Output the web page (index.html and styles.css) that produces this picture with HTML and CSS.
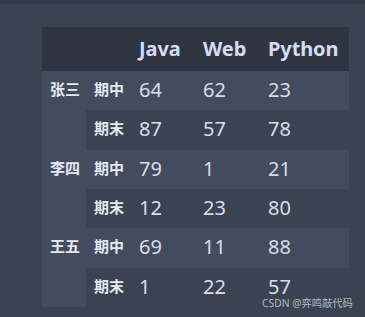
FILE: index.html
```html
<!DOCTYPE html>
<html lang="zh">
<head>
<meta charset="utf-8">
<link rel="stylesheet" href="styles.css">
</head>
<body>
<div class="topbar"></div>
<div class="page">
  <table class="scores">
    <colgroup>
      <col class="c-name"><col class="c-term"><col class="c-java"><col class="c-web"><col class="c-py">
    </colgroup>
    <thead>
      <tr><th></th><th></th><th>Java</th><th>Web</th><th>Python</th></tr>
    </thead>
    <tbody>
      <tr class="odd"><th class="name" rowspan="2">张三</th><th class="term">期中</th><td>64</td><td>62</td><td>23</td></tr>
      <tr class="even"><th class="term">期末</th><td>87</td><td>57</td><td>78</td></tr>
      <tr class="odd"><th class="name" rowspan="2">李四</th><th class="term">期中</th><td>79</td><td>1</td><td>21</td></tr>
      <tr class="even"><th class="term">期末</th><td>12</td><td>23</td><td>80</td></tr>
      <tr class="odd"><th class="name" rowspan="2">王五</th><th class="term">期中</th><td>69</td><td>11</td><td>88</td></tr>
      <tr class="even"><th class="term">期末</th><td>1</td><td>22</td><td>57</td></tr>
    </tbody>
  </table>
</div>
<div class="watermark">CSDN @弈鸣敲代码</div>
</body>
</html>
```
FILE: styles.css
```css
html, body {
  margin: 0;
  padding: 0;
}
body {
  background: #3b4252;
  width: 365px;
  height: 317px;
  overflow: hidden;
  position: relative;
  font-family: "Noto Sans", "Open Sans", "Noto Sans CJK SC", sans-serif;
}
.topbar {
  height: 4px;
  background: #323945;
}
.page {
  padding: 23px 0 0 42px;
}
.scores {
  border-collapse: collapse;
  border-spacing: 0;
  width: 307px;
  table-layout: fixed;
  color: #d8dee9;
}
.c-name { width: 44px; }
.c-term { width: 45px; }
.c-java { width: 64px; }
.c-web { width: 65px; }
.c-py { width: 89px; }
.scores th, .scores td {
  padding: 0 0 0 8px;
  text-align: left;
  white-space: nowrap;
  vertical-align: top;
  box-sizing: border-box;
}
.scores thead tr {
  background: #2e3440;
  height: 44px;
}
.scores thead th {
  font-size: 20px;
  font-weight: 700;
  color: #d3dcf5;
  padding-top: 8px;
  letter-spacing: -0.1px;
}
.scores tbody tr {
  height: 39.33px;
}
.scores tbody td {
  font-size: 20px;
  font-weight: 400;
  padding-top: 5px;
}
.scores .odd { background: #434c5e; }
.scores .even { background: #3b4252; }
.scores .name, .scores .term {
  font-family: "Noto Sans CJK SC", sans-serif;
  font-size: 15px;
  font-weight: 700;
  color: #e5e9f0;
  padding-top: 7px;
}
.watermark {
  position: absolute;
  left: 262px;
  top: 295px;
  font-family: "Noto Sans", "Noto Sans CJK SC", sans-serif;
  font-size: 10.3px;
  color: rgba(220, 224, 232, 0.75);
  white-space: nowrap;
}
```
